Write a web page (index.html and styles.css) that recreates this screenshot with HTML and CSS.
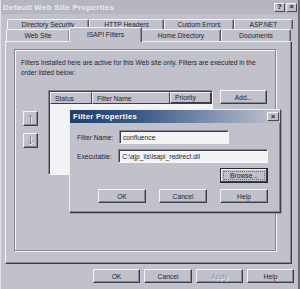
FILE: index.html
```html
<!doctype html>
<html lang="en">
<head>
	<meta charset="utf-8">
	<title>Default Web Site Properties</title>
	<link rel="stylesheet" href="styles.css">
</head>
<body>
	<div class="window">
		<div class="titlebar">
			<span class="title">Default Web Site Properties</span>
			<span class="caption-btn">?</span>
			<span class="caption-btn">&#215;</span>
		</div>

		<div class="tabs">
			<div class="tab-row tab-row-back">
				<span class="tab" style="width:82px">Directory Security</span>
				<span class="tab" style="width:75px">HTTP Headers</span>
				<span class="tab" style="width:70px">Custom Errors</span>
				<span class="tab" style="width:59px">ASP.NET</span>
			</div>
			<div class="tab-row tab-row-front">
				<span class="tab" style="width:64px">Web Site</span>
				<span class="tab tab-selected" style="width:73px">ISAPI Filters</span>
				<span class="tab" style="width:80px">Home Directory</span>
				<span class="tab" style="width:70px">Documents</span>
			</div>
		</div>

		<div class="panel">
			<div class="group">
				<p class="intro">Filters installed here are active for this Web site only. Filters are executed in the order listed below:</p>
				<div class="filters-row">
					<div class="order-buttons">
						<span class="btn btn-order">
							<svg width="7" height="9" viewBox="0 0 7 9"><path d="M3.5 1v8M1 3.5l2.5-2.5 2.5 2.5" fill="none" stroke="#fff" stroke-width="1" transform="translate(0.6 0.6)"/><path d="M3.5 1v8M1 3.5l2.5-2.5 2.5 2.5" fill="none" stroke="#858592" stroke-width="1"/></svg>
						</span>
						<span class="btn btn-order">
							<svg width="7" height="9" viewBox="0 0 7 9"><path d="M3.5 0v8M1 5.5l2.5 2.5 2.5-2.5" fill="none" stroke="#fff" stroke-width="1" transform="translate(0.6 0.6)"/><path d="M3.5 0v8M1 5.5l2.5 2.5 2.5-2.5" fill="none" stroke="#858592" stroke-width="1"/></svg>
						</span>
					</div>
					<div class="list">
						<div class="list-head">
							<span class="col" style="width:42px">Status</span>
							<span class="col" style="width:78px">Filter Name</span>
							<span class="col col-last">Priority</span>
						</div>
						<div class="list-body"></div>
					</div>
					<span class="btn btn-add">Add...</span>
				</div>
			</div>
		</div>

		<div class="footer">
			<span class="btn">OK</span>
			<span class="btn">Cancel</span>
			<span class="btn btn-disabled">Apply</span>
			<span class="btn">Help</span>
		</div>

		<div class="dialog">
			<div class="dialog-title">
				<span class="title">Filter Properties</span>
				<span class="caption-btn">&#215;</span>
			</div>
			<div class="dialog-body">
				<div class="field">
					<label class="field-label">Filter Name:</label>
					<span class="textbox" style="width:110px">confluence</span>
				</div>
				<div class="field">
					<label class="field-label">Executable:</label>
					<span class="textbox" style="width:152px">C:\ajp_iis\isapi_redirect.dll</span>
				</div>
				<div class="browse-row">
					<span class="btn btn-focus"><span class="focus-ring">Browse...</span></span>
				</div>
				<div class="dialog-buttons">
					<span class="btn">OK</span>
					<span class="btn">Cancel</span>
					<span class="btn">Help</span>
				</div>
			</div>
		</div>
	</div>
</body>
</html>
```

FILE: styles.css
```css
* {
	box-sizing: border-box;
}
body {
	margin: 0;
	background: #c1c1cb;
	font-family: "Liberation Sans", Arial, sans-serif;
	font-size: 6.7px;
	color: #23232e;
}

.window {
	position: relative;
	width: 300px;
	height: 289px;
	overflow: hidden;
	background: #c1c1cb;
	border-left: 1px solid #e2e2ea;
	border-right: 2px solid #6a6a74;
}

.titlebar {
	height: 14px;
	display: flex;
	align-items: center;
	padding: 0 1px 0 2px;
	background: #b6b6c1;
}
.titlebar .title {
	flex: 1;
	font-size: 7.9px;
	font-weight: 700;
	letter-spacing: .3px;
	color: #e9e9f0;
}
.caption-btn {
	width: 11px;
	height: 9px;
	margin-left: 1px;
	display: flex;
	align-items: center;
	justify-content: center;
	font-size: 8px;
	font-weight: 700;
	line-height: 1;
	color: #20202a;
	background: #c1c1cb;
	border: 1px solid;
	border-color: #f4f4f8 #4a4a54 #4a4a54 #f4f4f8;
}

/* tabs */
.tabs {
	margin-top: 5px;
}
.tab-row {
	display: flex;
}
.tab-row-back {
	padding-left: 6px;
	height: 10px;
}
.tab-row-front {
	padding-left: 5px;
	height: 12px;
}
.tab {
	display: flex;
	align-items: center;
	justify-content: center;
	border: 1px solid;
	border-bottom: none;
	border-color: #f2f2f6 #55555f #55555f #f2f2f6;
	border-radius: 2px 2px 0 0;
	box-shadow: inset -1px 0 #8a8a96;
}
.tab-selected {
	position: relative;
	margin: -2px -1px 0;
	height: 15px;
	z-index: 1;
	background: #c1c1cb;
	padding-bottom: 1px;
}

.panel {
	margin: 0 6px 0 4px;
	height: 223px;
	padding: 7px 15px 12px 8px;
	border: 1px solid;
	border-color: #f2f2f6 #3e3e48 #3e3e48 #f2f2f6;
	box-shadow: inset -1px -1px #868692;
}
.group {
	height: 100%;
	border: 1px solid #868692;
	box-shadow: inset 1px 1px #f4f4f8, 1px 1px #f4f4f8;
	padding: 8px 6px 0 6px;
}
.intro {
	margin: 0;
	line-height: 10px;
	width: 246px;
}

.filters-row {
	display: flex;
	align-items: flex-start;
	margin-top: 12px;
}
.order-buttons {
	display: flex;
	flex-direction: column;
	gap: 7px;
	margin: 21px 0 0 2px;
}
.list {
	margin-left: 10px;
	width: 165px;
	height: 85px;
	display: flex;
	flex-direction: column;
	border: 1px solid;
	border-color: #868692 #f4f4f8 #f4f4f8 #868692;
	box-shadow: inset 1px 1px #3e3e48;
}
.list-head {
	display: flex;
	height: 12px;
	margin: 1px 0 0 1px;
}
.col {
	display: flex;
	align-items: center;
	padding-left: 4px;
	border: 1px solid;
	border-color: #f4f4f8 #3e3e48 #3e3e48 #f4f4f8;
}
.col-last {
	flex: 1;
	border-right-width: 2px;
	border-bottom-width: 2px;
}
.list-body {
	flex: 1;
	margin-left: 1px;
	background: #f3f3f5;
}

/* buttons */
.btn {
	display: flex;
	align-items: center;
	justify-content: center;
	height: 14px;
	width: 47px;
	border: 1px solid;
	border-color: #f4f4f8 #3e3e48 #3e3e48 #f4f4f8;
	box-shadow: inset -1px -1px #868692;
	background: #c1c1cb;
}
.btn-disabled {
	color: #8c8c98;
	text-shadow: 1px 1px #f2f2f6;
}
.btn-add {
	margin-left: 7px;
	width: 47px;
}
.btn-order {
	width: 15px;
	height: 15px;
}

.footer {
	display: flex;
	justify-content: flex-end;
	gap: 4px;
	margin: 5px 4px 0 0;
}
.footer .btn:nth-child(2) {
	width: 48px;
}

/* filter properties dialog */
.dialog {
	position: absolute;
	left: 68px;
	top: 109px;
	width: 212px;
	height: 104px;
	background: #c1c1cb;
	border: 1px solid;
	border-color: #ededf2 #3e3e48 #3e3e48 #ededf2;
	box-shadow: inset -1px -1px #868692, 1px 1px 0 #9a9aa6;
}
.dialog-title {
	height: 13px;
	display: flex;
	align-items: center;
	padding: 0 1px 0 3px;
	background: linear-gradient(to right, #1f3e6c, #3d5d88 35%, #8696b2 70%, #c1c4d0);
}
.dialog-title .title {
	flex: 1;
	color: #fff;
	font-size: 7.7px;
	font-weight: 700;
	letter-spacing: .3px;
}
.dialog-title .caption-btn {
	width: 12px;
	font-size: 8px;
}
.dialog-body {
	padding: 7px 12px 0 7px;
	display: flex;
	flex-direction: column;
}
.field {
	display: flex;
	align-items: center;
	height: 14px;
	margin-bottom: 5px;
}
.field-label {
	width: 42px;
}
.textbox {
	height: 14px;
	display: flex;
	align-items: center;
	padding-left: 3px;
	background: #f3f3f5;
	color: #1a1a22;
	border: 1px solid;
	border-color: #868692 #f4f4f8 #f4f4f8 #868692;
	box-shadow: inset 1px 1px #3e3e48;
}
.browse-row {
	display: flex;
	justify-content: flex-end;
}
.btn-focus {
	height: 15px;
	width: 48px;
	border-color: #2a2a34;
	box-shadow: inset -1px -1px #3e3e48, inset 1px 1px #f4f4f8;
	padding: 2px;
}
.focus-ring {
	width: 100%;
	height: 100%;
	display: flex;
	align-items: center;
	justify-content: center;
	border: 1px dotted #6a6a74;
}
.dialog-buttons {
	display: flex;
	justify-content: flex-end;
	gap: 13px;
	margin-top: 6px;
}
.dialog-buttons .btn {
	width: 48px;
}
```
